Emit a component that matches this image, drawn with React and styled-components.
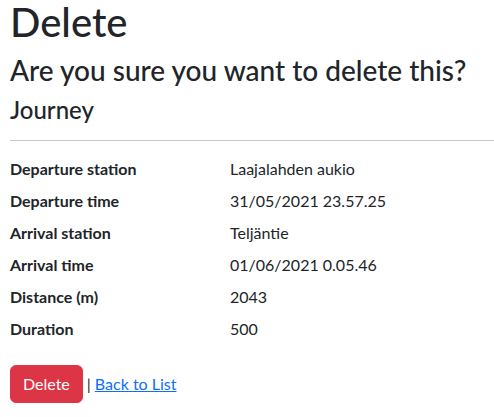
import React from "react";
import styled, { createGlobalStyle } from "styled-components";

const Global = createGlobalStyle`
  html, body { margin: 0; padding: 0; background: #fff; }
  body {
    font-family: Lato, "Noto Sans", sans-serif;
    font-size: 16px;
    line-height: 1.5;
    color: #212529;
  }
  * { box-sizing: border-box; }
`;

const Page = styled.main`
  padding: 0 0 0 10px;
  margin-top: -2px;
`;

const Title = styled.h1`
  font-size: 40px;
  font-weight: 500;
  line-height: 1.2;
  margin: 0 0 8px;
`;

const Question = styled.h3`
  font-size: 28px;
  font-weight: 500;
  line-height: 1.2;
  margin: 0 0 8px;
`;

const Subtitle = styled.h4`
  font-size: 24px;
  font-weight: 500;
  line-height: 1.2;
  margin: 0 0 8px;
`;

const Rule = styled.hr`
  margin: 16px 0;
  border: 0;
  border-top: 1px solid #c8c9ca;
`;

const Details = styled.dl`
  display: grid;
  grid-template-columns: 220px 1fr;
  margin: 0 0 16px;
`;

const Term = styled.dt`
  font-weight: 700;
  margin: 0 0 8px;
`;

const Value = styled.dd`
  margin: 0 0 8px;
`;

const Actions = styled.form`
  display: flex;
  align-items: center;
  gap: 4px;
`;

const DangerButton = styled.button`
  font-family: inherit;
  font-size: 16px;
  line-height: 1.5;
  color: #fff;
  background: #dc3545;
  border: 1px solid #dc3545;
  border-radius: 6px;
  padding: 6px 12px;
  cursor: pointer;
`;

const Link = styled.a`
  color: #0d6efd;
  text-decoration: underline;
`;

const rows = [
  ["Departure station", "Laajalahden aukio"],
  ["Departure time", "31/05/2021 23.57.25"],
  ["Arrival station", "Teljäntie"],
  ["Arrival time", "01/06/2021 0.05.46"],
  ["Distance (m)", "2043"],
  ["Duration", "500"],
];

export default function App() {
  return (
    <>
      <Global />
      <Page>
        <Title>Delete</Title>
        <Question>Are you sure you want to delete this?</Question>
        <div>
          <Subtitle>Journey</Subtitle>
          <Rule />
          <Details>
            {rows.map(([k, v]) => (
              <React.Fragment key={k}>
                <Term>{k}</Term>
                <Value>{v}</Value>
              </React.Fragment>
            ))}
          </Details>
          <Actions onSubmit={(e) => e.preventDefault()}>
            <DangerButton type="submit">Delete</DangerButton>
            <span>|</span>
            <Link href="#">Back to List</Link>
          </Actions>
        </div>
      </Page>
    </>
  );
}
